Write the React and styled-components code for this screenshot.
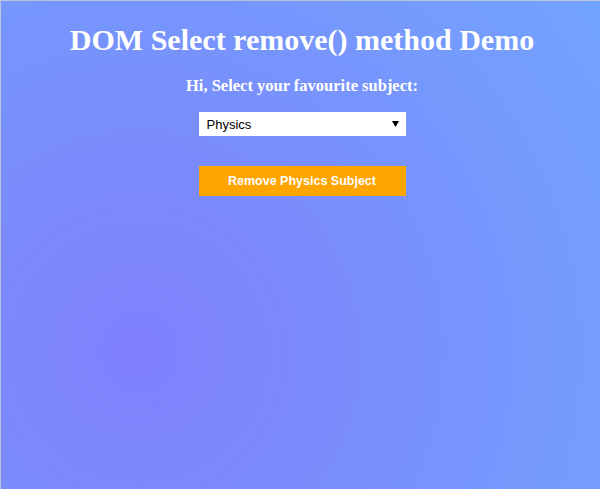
import React from "react";
import styled, { createGlobalStyle } from "styled-components";

const GlobalStyle = createGlobalStyle`
  html, body {
    margin: 0;
    height: 100%;
  }
  body {
    font-family: "Liberation Serif", "Times New Roman", serif;
  }
`;

const Page = styled.div`
  box-sizing: border-box;
  width: 600px;
  height: 489px;
  padding-left: 3px;
  border-top: 1px solid #b8c4dc;
  border-left: 1px solid #b8c4dc;
  background: radial-gradient(circle at 23% 72%, #8080fd 0%, #7a8cfb 35%, #72a4ff 100%);
  display: flex;
  flex-direction: column;
  align-items: center;
  color: #fff;
`;

const Title = styled.h1`
  margin: 21px 0 0;
  font-size: 30px;
  font-weight: bold;
  line-height: 36px;
`;

const Prompt = styled.h3`
  margin: 18px 0 0;
  font-size: 16.5px;
  font-weight: bold;
  line-height: 20px;
`;

const Select = styled.select`
  margin-top: 16px;
  width: 207px;
  height: 24px;
  border: none;
  border-radius: 0;
  background: #fff;
  padding: 0 8px;
  font-family: "Liberation Sans", Arial, sans-serif;
  font-size: 13px;
  color: #000;
  appearance: none;
  background-image: url("data:image/svg+xml;utf8,<svg xmlns='http://www.w3.org/2000/svg' width='7' height='6'><path d='M0 0 L7 0 L3.5 6 Z' fill='black'/></svg>");
  background-repeat: no-repeat;
  background-position: right 7px center;
`;

const Button = styled.button`
  margin-top: 30px;
  width: 207px;
  height: 30px;
  border: none;
  background: #ffa500;
  color: #fff;
  font-family: "Liberation Sans", Arial, sans-serif;
  font-size: 12.5px;
  font-weight: bold;
  cursor: pointer;
`;

export default function App() {
  return (
    <>
      <GlobalStyle />
      <Page>
        <Title>DOM Select remove() method Demo</Title>
        <Prompt>Hi, Select your favourite subject:</Prompt>
        <Select defaultValue="Physics">
          <option>Physics</option>
          <option>Chemistry</option>
          <option>Maths</option>
          <option>Biology</option>
        </Select>
        <Button>Remove Physics Subject</Button>
      </Page>
    </>
  );
}
